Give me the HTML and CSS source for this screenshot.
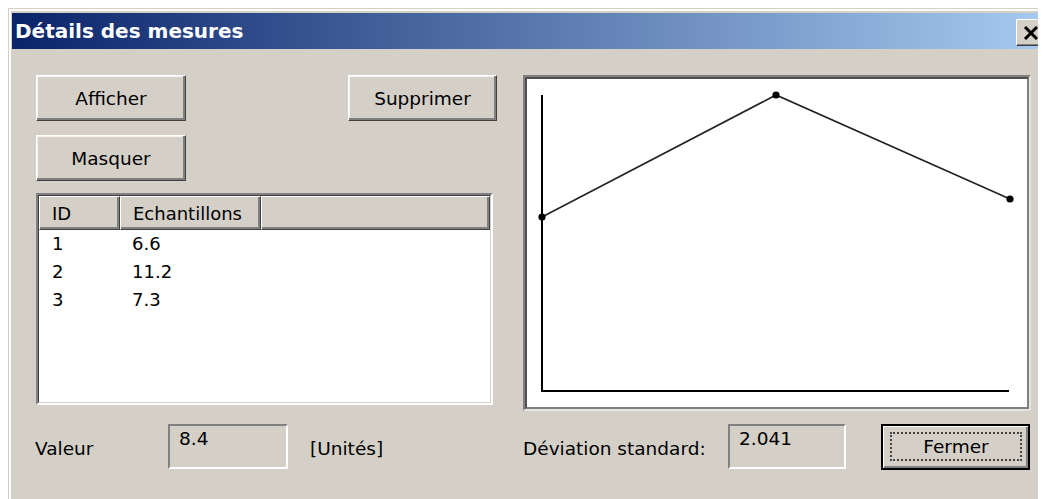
FILE: index.html
```html
<!DOCTYPE html>
<html lang="fr">
<head>
<meta charset="utf-8">
<title>Détails des mesures</title>
<link rel="stylesheet" href="styles.css">
</head>
<body>
<div class="window">
  <div class="frame">
    <div class="titlebar">
      <span class="title">Détails des mesures</span>
      <div class="close">
        <svg width="16" height="14" viewBox="0 0 16 14"><path d="M2 1 L14 13 M14 1 L2 13" stroke="#000" stroke-width="3" fill="none"/></svg>
      </div>
    </div>
    <div class="content">
      <div class="main">
        <div class="leftcol">
          <div class="btnrow">
            <div class="btn">Afficher</div>
            <div class="btn btn-supp">Supprimer</div>
          </div>
          <div class="btn masq">Masquer</div>
          <div class="listview">
            <div class="lv-inner">
              <div class="lv-header">
                <div class="hcell c1">ID</div>
                <div class="hcell c2">Echantillons</div>
                <div class="hcell c3"></div>
              </div>
              <div class="lv-row"><span class="cell c1">1</span><span class="cell c2">6.6</span></div>
              <div class="lv-row"><span class="cell c1">2</span><span class="cell c2">11.2</span></div>
              <div class="lv-row"><span class="cell c1">3</span><span class="cell c2">7.3</span></div>
            </div>
          </div>
        </div>
        <div class="chart">
          <div class="chart-inner">
            <svg width="500" height="328" viewBox="0 0 500 328">
              <line x1="15" y1="16" x2="15" y2="313" stroke="#000" stroke-width="2"/>
              <line x1="14" y1="312" x2="482" y2="312" stroke="#000" stroke-width="2"/>
              <polyline points="15,138 249,16 483,120" fill="none" stroke="#222" stroke-width="1.6"/>
              <circle cx="15" cy="138" r="3.6" fill="#000"/>
              <circle cx="249" cy="16" r="3.6" fill="#000"/>
              <circle cx="483" cy="120" r="3.6" fill="#000"/>
            </svg>
          </div>
        </div>
      </div>
      <div class="bottom">
        <div class="bleft">
          <span class="lbl lbl-valeur">Valeur</span>
          <div class="textbox tb-valeur">8.4</div>
          <span class="lbl lbl-units">[Unités]</span>
        </div>
        <div class="bright">
          <span class="lbl lbl-dev">Déviation standard:</span>
          <div class="textbox tb-dev">2.041</div>
          <div class="btn btn-default"><span class="focus">Fermer</span></div>
        </div>
      </div>
    </div>
  </div>
</div>
</body>
</html>
```
FILE: styles.css
```css
html {
  overflow: hidden;
}
body {
  margin: 8px;
  background: #ffffff;
  font-family: "DejaVu Sans", Verdana, sans-serif;
  font-size: 18.5px;
  color: #000;
}
.window {
  box-sizing: border-box;
  width: 1038px;
  height: 491px;
  background: #d4d0c8;
  border-top: 1px solid #d4d0c8;
  border-left: 1px solid #d4d0c8;
}
.frame {
  border-top: 2px solid #ffffff;
  border-left: 2px solid #ffffff;
  padding: 2px 0 0 1px;
  height: 100%;
  box-sizing: border-box;
}
.titlebar {
  height: 36px;
  background: linear-gradient(to right, #0a246a, #a6caf0);
  display: flex;
  align-items: flex-start;
  justify-content: space-between;
}
.title {
  color: #fff;
  font-weight: bold;
  font-size: 20px;
  line-height: 36px;
  padding-left: 3px;
  white-space: nowrap;
}
.close {
  box-sizing: border-box;
  width: 28px;
  height: 27px;
  margin-top: 6px;
  margin-right: 2px;
  background: #d4d0c8;
  border: 1px solid;
  border-color: #fff #404040 #404040 #fff;
  box-shadow: inset -1px -1px #808080;
  display: flex;
  align-items: center;
  justify-content: center;
  padding-left: 2px;
}
.close svg { display: block; }
.content {
  padding: 26px 0 0 24px;
}
.main {
  display: flex;
  gap: 26px;
  align-items: flex-start;
}
.leftcol {
  width: 461px;
  display: flex;
  flex-direction: column;
}
.btnrow {
  display: flex;
  justify-content: space-between;
}
.btn {
  box-sizing: border-box;
  width: 150px;
  height: 46px;
  background: #d4d0c8;
  border: 1px solid;
  border-color: #fff #404040 #404040 #fff;
  box-shadow: inset -2px -2px #808080, inset 1px 1px #f4f3f0;
  display: flex;
  align-items: center;
  justify-content: center;
  white-space: nowrap;
}
.btn-supp { width: 149px; }
.masq { margin-top: 14px; }
.listview {
  box-sizing: border-box;
  margin-top: 12px;
  width: 457px;
  height: 212px;
  border: 2px solid;
  border-color: #808080 #fff #fff #808080;
  background: #fff;
  font-size: 18px;
}
.lv-inner {
  box-sizing: border-box;
  height: 100%;
  border: 1px solid;
  border-color: #404040 #d4d0c8 #d4d0c8 #404040;
}
.lv-header {
  display: flex;
  height: 34px;
}
.hcell {
  box-sizing: border-box;
  background: #d4d0c8;
  border: 1px solid;
  border-color: #fff #404040 #404040 #fff;
  box-shadow: inset -2px -2px #808080;
  padding-left: 12px;
  line-height: 31px;
  padding-top: 1px;
}
.hcell.c1 { width: 81px; }
.hcell.c2 { width: 141px; }
.hcell.c3 { flex: 1; }
.lv-row {
  display: flex;
  height: 28px;
  line-height: 28px;
}
.cell { display: block; padding-left: 13px; box-sizing: border-box; }
.cell.c1 { width: 81px; }
.cell.c2 { width: 141px; padding-left: 12px; }
.chart {
  box-sizing: border-box;
  width: 508px;
  height: 336px;
  border: 2px solid;
  border-color: #808080 #e6e4df #e6e4df #808080;
}
.chart-inner {
  box-sizing: border-box;
  height: 100%;
  border: 2px solid;
  border-color: #505050 #808080 #808080 #505050;
  background: #fff;
}
.chart-inner svg { display: block; }
.bottom {
  margin-top: 13px;
  display: flex;
  gap: 26px;
}
.bleft, .bright {
  display: flex;
  align-items: flex-start;
}
.bleft { width: 461px; margin-left: -1px; }
.lbl {
  white-space: nowrap;
  line-height: 22px;
  padding-top: 14px;
}
.lbl-valeur { width: 133px; }
.lbl-units { margin-left: 22px; }
.lbl-dev { width: 206px; padding-left: 1px; box-sizing: border-box; }
.textbox {
  box-sizing: border-box;
  height: 45px;
  border: 2px solid;
  border-color: #808080 #fff #fff #808080;
  padding: 2px 0 0 9px;
  line-height: 22px;
}
.tb-valeur { width: 120px; }
.tb-dev { width: 118px; }
.btn-default {
  margin-left: 35px;
  width: 149px;
  height: 46px;
  border: 2px solid #000;
  box-shadow: inset 1px 1px #fff, inset -2px -2px #808080;
  padding: 6px 6px 7px 7px;
}
.focus {
  box-sizing: border-box;
  width: 100%;
  height: 100%;
  border: 2px dotted #444;
  display: flex;
  align-items: center;
  justify-content: center;
}
```
